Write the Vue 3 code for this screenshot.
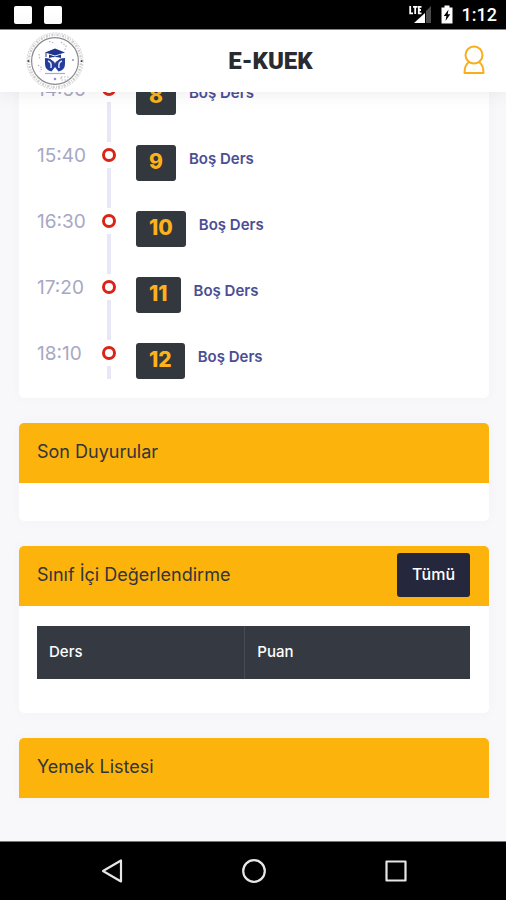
<script setup>
import { onMounted, ref } from 'vue'

const content = ref(null)

const lessons = [
  { time: '14:50', no: 8, title: 'Boş Ders' },
  { time: '15:40', no: 9, title: 'Boş Ders' },
  { time: '16:30', no: 10, title: 'Boş Ders' },
  { time: '17:20', no: 11, title: 'Boş Ders' },
  { time: '18:10', no: 12, title: 'Boş Ders' }
]

onMounted(() => {
  content.value.scrollTop = content.value.scrollHeight
})
</script>

<template>
  <div class="screen">
    <div class="status">
      <div class="notices">
        <span class="notice"></span>
        <span class="notice"></span>
      </div>
      <div class="system">
        <svg width="23" height="19" viewBox="0 0 23 19" aria-hidden="true">
          <path d="M22 1V18H17V6Z" fill="#4c4c4c" />
          <path d="M5 18L16 8V18Z" fill="#fff" />
          <path d="M1.2 1V8.300H4M4 1.800H8.500M6.200 1.500V9M12.500 1.800H9.800V8.300H12.500M9.800 5H12" fill="none" stroke="#fff" stroke-width="1.800" />
        </svg>
        <svg class="battery" width="12" height="19" viewBox="0 0 12 19" aria-hidden="true">
          <path d="M3.500 0.500H8.500V2.500H11.500V18.500H0.500V2.500H3.500Z" fill="#fff" />
          <path d="M7.500 4.500L2.800 11H5.400L4.500 16L9.300 9.300H6.700Z" fill="#000" />
        </svg>
        <span class="clock">1:12</span>
      </div>
    </div>

    <header class="topbar">
      <a class="logo" href="#" aria-label="E-KUEK">
        <svg width="60" height="58" viewBox="0 0 60 58" aria-hidden="true">
          <circle cx="30" cy="29" r="28" fill="none" stroke="#d2d2d4" stroke-width="1" stroke-dasharray="2 1" />
          <circle cx="30" cy="29" r="26" fill="none" stroke="#cfcfd2" stroke-width="2.400" stroke-dasharray="1 1.400 2 1.100" />
          <circle cx="30" cy="29" r="23.400" fill="#fff" stroke="#8a8a8e" stroke-width="1.200" />
          <circle cx="3.400" cy="29" r="1" fill="#444" />
          <circle cx="56.600" cy="29" r="1" fill="#444" />
          <g fill="none" stroke="#b9bac4" stroke-width="1.200" stroke-dasharray="1.500 1.500">
            <path d="M24 9.500L30 11M36 10L41 14L40 18" />
            <path d="M14 22L15 28M13 33L17 36L15 40" />
            <path d="M36 45H43V48H36Z" />
          </g>
          <circle cx="48" cy="28" r="1" fill="#9192bb" />
          <circle cx="30" cy="47" r="1.300" fill="#9192bb" />
          <path d="M20 20.500L30 16.500L40 20.500L30 23.500Z" fill="#20368d" />
          <path d="M24 22.500L30 24.500L36 22.500V26Q30 24 24 26Z" fill="#20368d" />
          <path d="M21 20.500V25" stroke="#20368d" />
          <path d="M20 26Q26 26 29.500 30L30 32L30.500 30Q34 26 40 26V32Q40 38 33.500 39.500L30 35L26.500 39.500Q20 38 20 32Z" fill="#243d9b" />
          <path d="M23 29Q27 30 26 36M37 29Q33 30 34 36" fill="none" stroke="#dfe5ff" stroke-width="1.500" />
          <path d="M26 27L30 30L34 27" fill="none" stroke="#fff" />
          <path d="M20 41.500H40" stroke="#a7acc9" stroke-width="1.200" />
        </svg>
      </a>
      <h1 class="brand">E-KUEK</h1>
      <button class="profile" type="button" aria-label="Profil">
        <svg width="24" height="32" viewBox="0 0 24 32" fill="none" stroke="#f9ae1c" stroke-width="2" stroke-linejoin="round" aria-hidden="true">
          <circle cx="12" cy="10" r="8.500" />
          <path d="M7 17Q2.500 20 2.500 28H21.500Q21.500 20 17 17" />
        </svg>
      </button>
    </header>

    <main ref="content" class="content">
      <section class="card schedule">
        <ol class="timeline">
          <li v-for="lesson in lessons" :key="lesson.no" class="lesson">
            <time class="time">{{ lesson.time }}</time>
            <span class="marker"><span class="dot"></span><span class="line"></span></span>
            <span class="number">{{ lesson.no }}</span>
            <span class="title">{{ lesson.title }}</span>
          </li>
        </ol>
      </section>

      <section class="card">
        <div class="card-head"><h2>Son Duyurular</h2></div>
        <div class="card-body"></div>
      </section>

      <section class="card">
        <div class="card-head">
          <h2>Sınıf İçi Değerlendirme</h2>
          <button class="all" type="button">Tümü</button>
        </div>
        <div class="card-body grades">
          <table>
            <thead>
              <tr><th scope="col">Ders</th><th scope="col">Puan</th></tr>
            </thead>
          </table>
        </div>
      </section>

      <section class="card open">
        <div class="card-head"><h2>Yemek Listesi</h2></div>
      </section>
    </main>

    <nav class="navbar">
      <button type="button" aria-label="Geri">
        <svg width="26" height="26" viewBox="0 0 26 26" fill="none" stroke="#e6e6e6" stroke-width="2.200" stroke-linejoin="round"><path d="M22 2.500V23.500L4 13Z" /></svg>
      </button>
      <button type="button" aria-label="Ana ekran">
        <svg width="26" height="26" viewBox="0 0 26 26" fill="none" stroke="#e6e6e6" stroke-width="2.200"><circle cx="13" cy="13" r="10.800" /></svg>
      </button>
      <button type="button" aria-label="Son uygulamalar">
        <svg width="26" height="26" viewBox="0 0 26 26" fill="none" stroke="#e6e6e6" stroke-width="2.200" stroke-linejoin="round"><rect x="3.500" y="3.500" width="19" height="19" /></svg>
      </button>
    </nav>
  </div>
</template>

<style>
body {
  margin: 0;
}
</style>

<style scoped>
.screen {
  display: flex;
  flex-direction: column;
  height: 100vh;
  background: #f8f8fb;
  color: #32353c;
  font-family: Inter, "Noto Sans", sans-serif;
}

button {
  padding: 0;
  border: 0;
  background: none;
  font: inherit;
  cursor: pointer;
}

svg {
  display: block;
}

.status {
  display: flex;
  flex: none;
  align-items: center;
  justify-content: space-between;
  box-sizing: border-box;
  height: 30px;
  padding: 0 9px 0 14px;
  border-bottom: 1px solid #8a8a8a;
  background: #000;
  color: #fff;
}

.notices {
  display: flex;
  gap: 12px;
}

.notice {
  width: 18px;
  height: 18px;
  border-radius: 2px;
  background: #fff;
}

.system {
  display: flex;
  align-items: center;
  gap: 9px;
}

.clock {
  font-family: Roboto, sans-serif;
  font-size: 18px;
  font-weight: 500;
  line-height: 20px;
}

.topbar {
  display: grid;
  z-index: 1;
  grid-template-columns: 60px 1fr 30px;
  flex: none;
  align-items: center;
  height: 62px;
  padding: 0 20px 0 25px;
  background: #fff;
  box-shadow: 0 0 20px rgba(60, 60, 70, 0.1);
}

.brand {
  margin: 0;
  color: #292b30;
  font-family: Roboto, sans-serif;
  font-size: 24px;
  font-weight: 900;
  line-height: 30px;
  text-align: center;
}

.profile {
  justify-self: end;
}

.content {
  display: flex;
  flex: 1;
  flex-direction: column;
  gap: 25px;
  min-height: 0;
  padding: 0 17px 43px 19px;
  overflow-y: auto;
  scrollbar-width: none;
}

.card {
  flex: none;
  border-radius: 5px;
  background: #fff;
  box-shadow: 0 0 12px rgba(80, 80, 120, 0.03);
  overflow: hidden;
}

.open {
  border-radius: 5px 5px 0 0;
}

.schedule {
  padding: 19px 18px;
}

.timeline {
  margin: 0;
  padding: 0;
  list-style: none;
}

.lesson {
  display: grid;
  grid-template-columns: 65px 14px auto 1fr;
  height: 66px;
}

.lesson:last-child {
  height: 36px;
}

.time {
  color: #a7a8c3;
  font-size: 19px;
  line-height: 22px;
}

.marker {
  display: flex;
  flex-direction: column;
  align-items: center;
  gap: 6px;
  padding: 3px 0;
}

.lesson:last-child .marker {
  padding-bottom: 0;
}

.dot {
  box-sizing: border-box;
  flex: none;
  width: 14px;
  height: 14px;
  border: 3px solid #db2318;
  border-radius: 50%;
}

.line {
  flex: 1;
  width: 4px;
  background: #e7e7f5;
}

.number {
  height: 36px;
  margin-left: 20px;
  padding: 0 13px;
  border-radius: 3px;
  background: #32383e;
  color: #fdb21a;
  font-size: 21px;
  font-weight: 800;
  line-height: 34px;
}

.title {
  padding-left: 13px;
  color: #4b4e94;
  font-size: 15px;
  font-weight: 600;
  line-height: 28px;
}

.card-head {
  display: flex;
  align-items: center;
  justify-content: space-between;
  box-sizing: border-box;
  height: 60px;
  padding: 0 19px 2px 18px;
  background: #fcb30b;
}

.card-head h2 {
  margin: 0;
  font-size: 18px;
  font-weight: 400;
  line-height: 24px;
}

.all {
  height: 44px;
  padding: 0 15px 2px;
  border-radius: 3px;
  background: #25273c;
  color: #fff;
  font-size: 16px;
  font-weight: 500;
}

.card-body {
  padding: 19px 18px;
}

.grades {
  padding: 20px 19px 34px 18px;
}

table {
  width: 100%;
  border-collapse: collapse;
  table-layout: fixed;
  background: #353a42;
}

th {
  box-sizing: border-box;
  height: 53px;
  padding: 0 12px 3px;
  color: #fff;
  font-size: 15px;
  font-weight: 500;
  text-align: left;
}

th:first-child {
  width: 48%;
  border-right: 1px solid #484d55;
}

.navbar {
  display: flex;
  flex: none;
  align-items: center;
  justify-content: space-around;
  box-sizing: border-box;
  height: 59px;
  padding: 0 39px 0 41px;
  border-top: 1px solid #777;
  background: #000;
}
</style>
